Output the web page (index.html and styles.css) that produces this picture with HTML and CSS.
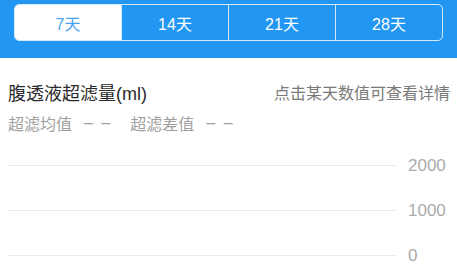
FILE: index.html
```html
<!DOCTYPE html>
<html lang="zh-CN">
<head>
<meta charset="utf-8">
<link rel="stylesheet" href="styles.css">
</head>
<body>
<div class="header">
  <div class="seg">
    <div class="seg-item active">7天</div>
    <div class="seg-item">14天</div>
    <div class="seg-item">21天</div>
    <div class="seg-item">28天</div>
  </div>
</div>
<div class="content">
  <div class="title-row">
    <div class="title">腹透液超滤量(ml)</div>
    <div class="hint">点击某天数值可查看详情</div>
  </div>
  <div class="stats">
    <span class="stat-label">超滤均值</span><span class="stat-val">– –</span>
    <span class="stat-label second">超滤差值</span><span class="stat-val">– –</span>
  </div>
  <div class="chart">
    <div class="grid-row"><div class="line"></div><div class="axis">2000</div></div>
    <div class="grid-row"><div class="line"></div><div class="axis">1000</div></div>
    <div class="grid-row"><div class="line"></div><div class="axis">0</div></div>
  </div>
</div>
</body>
</html>
```
FILE: styles.css
```css
html, body {
  margin: 0;
  padding: 0;
  background: #fff;
  font-family: "Liberation Sans", "Noto Sans CJK SC", sans-serif;
}
.header {
  background: #2196f3;
  padding: 4px 14px 17px;
}
.seg {
  display: flex;
  height: 37px;
  box-sizing: border-box;
  border: 1px solid rgba(255, 255, 255, 0.8);
  border-radius: 5px;
  overflow: hidden;
}
.seg-item {
  flex: 1;
  display: flex;
  align-items: center;
  justify-content: center;
  color: #fff;
  font-size: 16px;
  border-left: 1px solid rgba(255, 255, 255, 0.8);
}
.seg-item:first-child {
  border-left: none;
}
.seg-item.active {
  background: #fff;
  color: #4aa3f2;
}
.content {
  padding: 0 7px 0 8px;
}
.title-row {
  display: flex;
  justify-content: space-between;
  align-items: center;
  margin-top: 22px;
  height: 24px;
}
.title {
  font-size: 18px;
  color: #2a2a2a;
}
.hint {
  font-size: 16px;
  color: #7a7a7a;
}
.stats {
  display: flex;
  align-items: center;
  margin-top: 8px;
  height: 22px;
  font-size: 16px;
  color: #a0a0a0;
}
.stat-val {
  margin-left: 12px;
  letter-spacing: 2px;
}
.stat-label.second {
  margin-left: 18px;
}
.chart {
  margin-top: 9px;
}
.grid-row {
  display: flex;
  align-items: center;
  height: 45px;
}
.line {
  flex: 1;
  height: 1px;
  background: #ebebeb;
}
.axis {
  width: 42px;
  margin-left: 12px;
  font-size: 17px;
  color: #ababab;
}
```
